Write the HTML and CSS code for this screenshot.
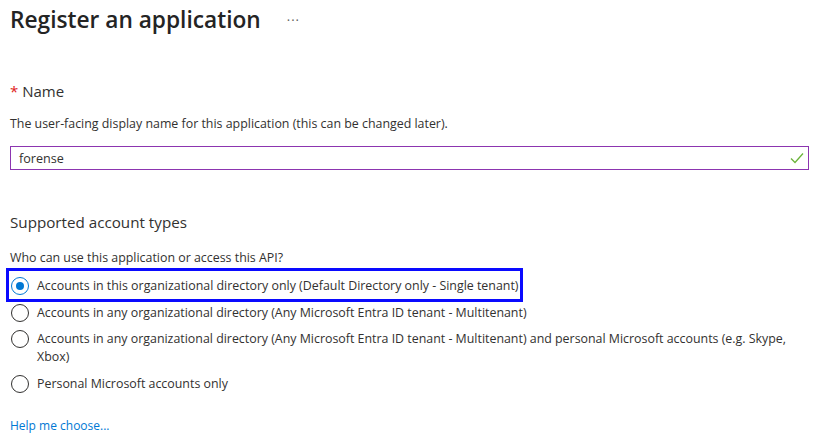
FILE: index.html
```html
<!DOCTYPE html>
<html lang="en">
<head>
<meta charset="utf-8">
<title>Register an application</title>
<link rel="stylesheet" href="styles.css">
</head>
<body>
<div class="page">
  <header class="title-row">
    <h1 class="title">Register an application</h1>
    <span class="more">···</span>
  </header>

  <section class="field">
    <div class="field-label"><span class="req">*</span> Name</div>
    <p class="desc">The user-facing display name for this application (this can be changed later).</p>
    <div class="input">
      <span class="input-value">forense</span>
      <svg class="check" width="14" height="12" viewBox="0 0 14 12"><path d="M1 6.5 L5 10.5 L13 1.5" fill="none" stroke="#6bb33a" stroke-width="1.3"/></svg>
    </div>
  </section>

  <section class="accounts">
    <h2 class="section-title">Supported account types</h2>
    <p class="question">Who can use this application or access this API?</p>
    <div class="radios">
      <div class="radio-row selected highlight">
        <span class="radio"></span>
        <span class="radio-text">Accounts in this organizational directory only (Default Directory only - Single tenant)</span>
      </div>
      <div class="radio-row">
        <span class="radio"></span>
        <span class="radio-text">Accounts in any organizational directory (Any Microsoft Entra ID tenant - Multitenant)</span>
      </div>
      <div class="radio-row">
        <span class="radio"></span>
        <span class="radio-text">Accounts in any organizational directory (Any Microsoft Entra ID tenant - Multitenant) and personal Microsoft accounts (e.g. Skype, Xbox)</span>
      </div>
      <div class="radio-row">
        <span class="radio"></span>
        <span class="radio-text">Personal Microsoft accounts only</span>
      </div>
    </div>
    <a class="help" href="#">Help me choose...</a>
  </section>
</div>
</body>
</html>
```
FILE: styles.css
```css
* { box-sizing: border-box; }
html, body { margin: 0; padding: 0; background: #fff; }
body {
  font-family: "Open Sans", "Noto Sans", sans-serif;
  color: #323130;
  font-size: 12.4px;
}
.page {
  padding: 0 4px 0 10px;
  width: 813px;
}
.title-row {
  display: flex;
  align-items: center;
  gap: 26px;
  height: 38px;
}
.title {
  margin: 0;
  font-size: 22.7px;
  font-weight: 600;
  color: #242424;
}
.more {
  font-size: 13px;
  color: #605e5c;
  letter-spacing: 1px;
  padding-top: 2px;
}
.field { margin-top: 43px; }
.field-label {
  font-size: 15px;
  line-height: 20px;
}
.req { color: #e02020; }
.desc {
  margin: 15px 0 0;
  font-size: 12.4px;
  line-height: 16px;
}
.input {
  margin-top: 14px;
  height: 24px;
  border: 1px solid #8c35b0;
  display: flex;
  align-items: center;
  justify-content: space-between;
  padding: 0 4px 0 8px;
}
.input-value { font-size: 12.6px; }
.check { display: block; }
.accounts { margin-top: 42px; }
.section-title {
  margin: 0;
  font-size: 15.2px;
  font-weight: 400;
  line-height: 20px;
}
.question {
  margin: 18px 0 0;
  font-size: 12.4px;
  line-height: 16px;
}
.radios {
  margin-top: 11px;
  display: flex;
  flex-direction: column;
  gap: 8.5px;
}
.radio-row {
  display: flex;
  align-items: flex-start;
  gap: 8px;
  font-size: 12.4px;
  line-height: 18px;
  padding-left: 1px;
  padding-right: 20px;
}
.radio {
  flex: none;
  width: 18px;
  height: 18px;
  border: 1px solid #323130;
  border-radius: 50%;
  position: relative;
}
.selected .radio { border-color: #0078d4; }
.selected .radio::after {
  content: "";
  position: absolute;
  left: 4px; top: 4px;
  width: 8px; height: 8px;
  border-radius: 50%;
  background: #0078d4;
}
.highlight {
  position: relative;
  align-self: flex-start;
  padding-right: 0;
}
.highlight::after {
  content: "";
  position: absolute;
  left: -4px; right: -5px; top: -9px; bottom: -7px;
  border: 3px solid #0a0aff;
}
.help {
  display: inline-block;
  margin-top: 24px;
  color: #0078d4;
  text-decoration: none;
  font-size: 12px;
}
```
